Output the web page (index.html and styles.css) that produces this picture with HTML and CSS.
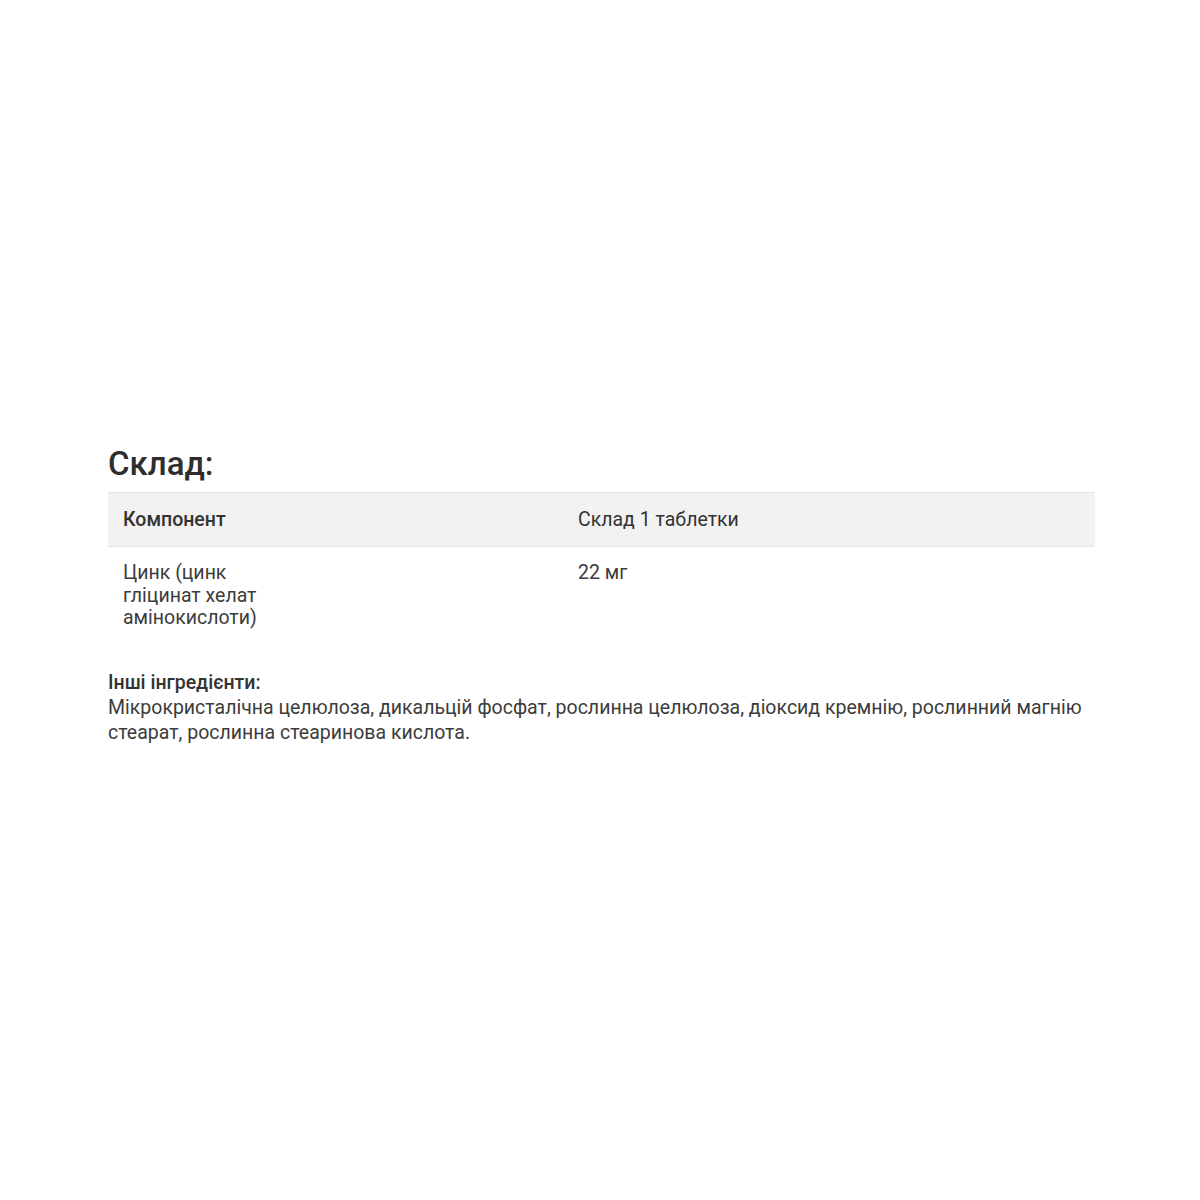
FILE: index.html
```html
<!DOCTYPE html>
<html lang="uk">
<head>
<meta charset="utf-8">
<link rel="stylesheet" href="styles.css">
</head>
<body>
<div class="page">
  <section class="composition">
    <h2 class="title">Склад:</h2>
    <table class="comp-table">
      <colgroup>
        <col class="col-name">
        <col class="col-amount">
      </colgroup>
      <thead>
        <tr>
          <th class="head-name">Компонент</th>
          <th class="head-amount">Склад 1 таблетки</th>
        </tr>
      </thead>
      <tbody>
        <tr>
          <td><div class="name-text">Цинк (цинк гліцинат хелат амінокислоти)</div></td>
          <td>22 мг</td>
        </tr>
      </tbody>
    </table>
    <div class="other">
      <div class="other-title">Інші інгредієнти:</div>
      <div class="other-text">Мікрокристалічна целюлоза, дикальцій фосфат, рослинна целюлоза, діоксид кремнію, рослинний магнію стеарат, рослинна стеаринова кислота.</div>
    </div>
  </section>
</div>
</body>
</html>
```

FILE: styles.css
```css
html, body {
  margin: 0;
  padding: 0;
  background: #ffffff;
}
body {
  font-family: Roboto, "Liberation Sans", sans-serif;
  color: #333333;
}
.page {
  width: 1200px;
  height: 1200px;
  box-sizing: border-box;
  padding: 444px 0 0 108px;
}
.composition {
  width: 987px;
}
.title {
  margin: 0 0 8px 0;
  font-size: 33px;
  font-weight: 500;
  line-height: 40px;
  color: #2e2e2e;
}
.comp-table {
  width: 100%;
  table-layout: fixed;
  border-collapse: collapse;
  font-size: 19.5px;
}
.col-name {
  width: 455px;
}
.comp-table thead tr {
  background: #f2f2f2;
  border-top: 1px solid #e4e4ea;
  border-bottom: 1px solid #e4e4ea;
}
.comp-table th {
  text-align: left;
  height: 53px;
  padding: 0 15px;
  color: #333333;
  line-height: 22px;
}
.head-name {
  font-weight: 500;
}
.head-amount {
  font-weight: 400;
}
.comp-table td {
  vertical-align: top;
  padding: 15px 15px 13px 15px;
  line-height: 22.5px;
  color: #3c3c3c;
}
.name-text {
  max-width: 170px;
}
.other {
  margin-top: 27px;
  font-size: 19.5px;
  line-height: 25px;
  color: #3c3c3c;
}
.other-title {
  font-weight: 500;
  color: #333333;
}
```
